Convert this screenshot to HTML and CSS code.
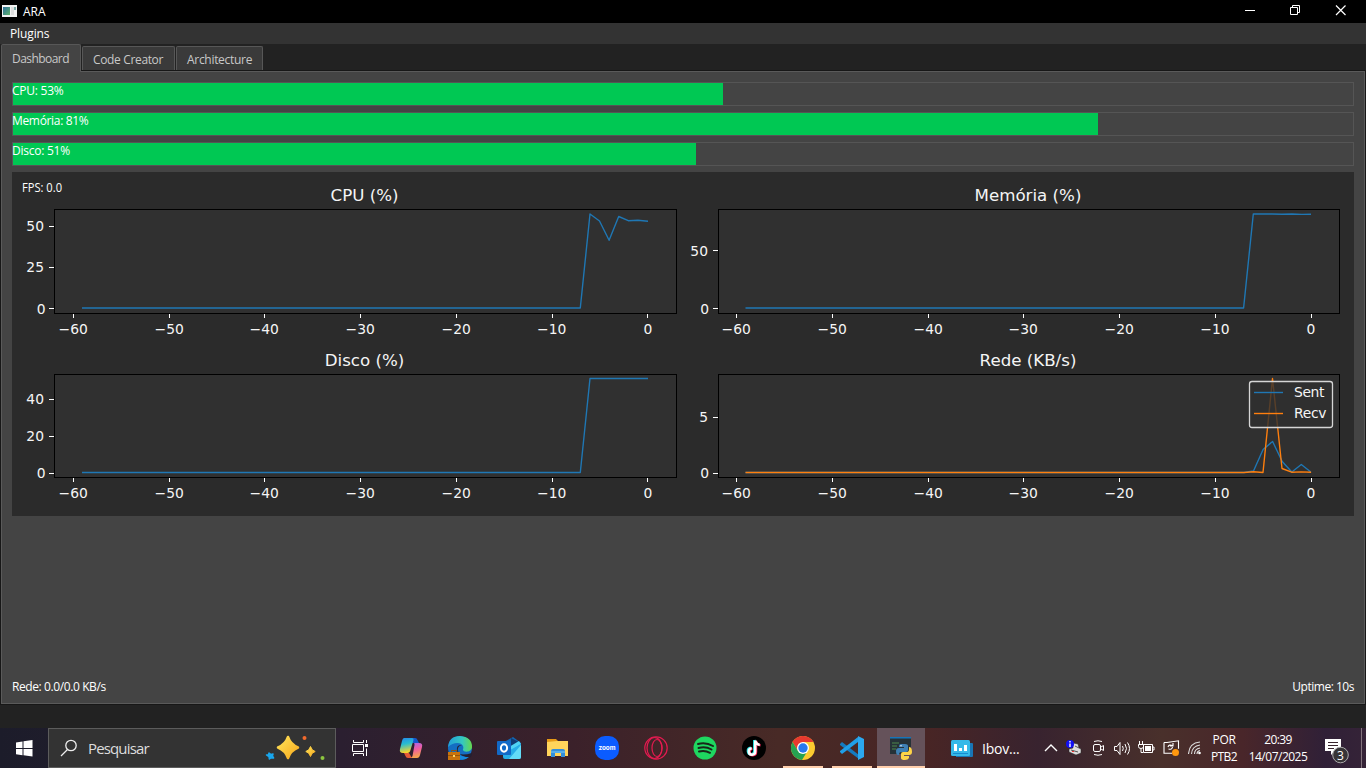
FILE: index.html
```html
<!DOCTYPE html>
<html lang="pt-BR">
<head>
<meta charset="utf-8">
<title>ARA</title>
<link rel="stylesheet" href="styles.css">
</head>
<body>
<div class="desktop">
  <header class="titlebar">
    <svg class="app-icon" width="15" height="13" viewBox="0 0 15 13"><defs><linearGradient id="ai" x2="1" y2="1"><stop stop-color="#2d6f9e"/><stop offset="1" stop-color="#5fb26a"/></linearGradient></defs><path fill="#f2f2f2" d="M0 0h15v12H0z"/><path fill="url(#ai)" d="M1 2h7v8H1z"/><path fill="#ddd" d="M9 2h3v8H9z"/><path fill="#79a9a6" d="M12 2h2v3h-2z"/></svg>
    <span class="title">ARA</span>
    <div class="controls">
      <svg width="46" height="23"><path d="M18 10.5h10" stroke="#fff"/></svg>
      <svg width="46" height="23" fill="none" stroke="#fff"><path d="M17.500 7.500h7v7h-7zM19.500 7.500v-2h7v7h-2"/></svg>
      <svg width="46" height="23"><path d="M17 5.500l9.500 9.500M26.500 5.500L17 15" stroke="#fff" stroke-width="1.200"/></svg>
    </div>
  </header>
  <nav class="menubar"><span class="menu-item">Plugins</span></nav>
  <div class="tabs">
    <div class="tab active"><span>Dashboard</span></div>
    <div class="tab code"><span>Code Creator</span></div>
    <div class="tab arch"><span>Architecture</span></div>
  </div>
  <main class="pane">
    <div class="bars">
      <div class="bar"><div class="fill" style="width:710px">CPU: 53%</div></div>
      <div class="bar"><div class="fill mem" style="width:1085px">Memória: 81%</div></div>
      <div class="bar"><div class="fill" style="width:683px">Disco: 51%</div></div>
    </div>
    <svg class="figure" width="1342" height="344" viewBox="12 172 1342 344">
      <path fill="#2b2b2b" d="M12 172h1342v344H12z"/>
      <text class="fps" x="22" y="192" textLength="40" lengthAdjust="spacingAndGlyphs">FPS: 0.0</text>
      <g class="axes">
        <rect x="54.500" y="209.500" width="622" height="104"/><rect x="718.500" y="209.500" width="621" height="104"/>
        <rect x="54.500" y="374.500" width="622" height="103"/><rect x="718.500" y="374.500" width="621" height="103"/>
      </g>
      <g class="ticks">
        <path d="M73.500 314v4M169.500 314v4M264.500 314v4M360.500 314v4M456.500 314v4M552.500 314v4M647.500 314v4"/>
        <path d="M73.500 478v4M169.500 478v4M264.500 478v4M360.500 478v4M456.500 478v4M552.500 478v4M647.500 478v4"/>
        <path d="M736.500 314v4M832.500 314v4M928.500 314v4M1023.500 314v4M1119.500 314v4M1215.500 314v4M1311.500 314v4"/>
        <path d="M736.500 478v4M832.500 478v4M928.500 478v4M1023.500 478v4M1119.500 478v4M1215.500 478v4M1311.500 478v4"/>
        <path d="M49 226.500h5M49 267.500h5M49 308.500h5M49 399.500h5M49 436.500h5M49 473.500h5M713 250.500h5M713 308.500h5M713 417.500h5M713 473.500h5"/>
      </g>
      <g class="names"><text x="364.500" y="201">CPU (%)</text><text x="1028" y="201">Memória (%)</text><text x="364.500" y="366">Disco (%)</text><text x="1028" y="366">Rede (KB/s)</text></g>
      <g class="xl">
        <text x="73.200" y="334">−60</text><text x="169.200" y="334">−50</text><text x="264.200" y="334">−40</text><text x="360.200" y="334">−30</text><text x="456.200" y="334">−20</text><text x="551.700" y="334">−10</text><text x="648" y="334">0</text>
        <text x="73.200" y="498">−60</text><text x="169.200" y="498">−50</text><text x="264.200" y="498">−40</text><text x="360.200" y="498">−30</text><text x="456.200" y="498">−20</text><text x="551.700" y="498">−10</text><text x="648" y="498">0</text>
        <text x="736.200" y="334">−60</text><text x="832.200" y="334">−50</text><text x="928.200" y="334">−40</text><text x="1023.200" y="334">−30</text><text x="1119.200" y="334">−20</text><text x="1215" y="334">−10</text><text x="1311" y="334">0</text>
        <text x="736.200" y="498">−60</text><text x="832.200" y="498">−50</text><text x="928.200" y="498">−40</text><text x="1023.200" y="498">−30</text><text x="1119.200" y="498">−20</text><text x="1215" y="498">−10</text><text x="1311" y="498">0</text>
      </g>
      <g class="yl">
        <text x="44" y="231">50</text><text x="44" y="272">25</text><text x="45.500" y="314">0</text>
        <text x="44" y="404">40</text><text x="44" y="441">20</text><text x="45.500" y="478">0</text>
        <text x="708" y="256">50</text><text x="709" y="314">0</text><text x="708" y="422">5</text><text x="709" y="478">0</text>
      </g>
      <g class="line">
        <path d="M82 308H580.300L590 214l9.500 7 9.600 19.300 9.600-23.800 9.600 4.200 9.600-.4 10.100 1"/>
        <path d="M745.500 308H1243.600L1253.300 214H1272l10 .2 10-.2 10 .4 9-.2"/>
        <path d="M82 472.500H580.300L590 378.500H648"/>
        <path d="M745.500 472.500H1244L1253.500 471l9.600-21.500 9.500-8 9.600 20 9.600 10.500 9.500-7.500 9.500 7.500"/>
        <path class="recv" d="M745.500 472.500H1244l9.500-.7 9.500.7 9.500-94 9.500 90 9.600 3.700 9.500-.3 10 .4"/>
      </g>
      <rect class="legend" x="1249.500" y="381.500" width="83" height="46" rx="2.500"/>
      <g class="line"><path d="M1254 392.500h29"/><path class="recv" d="M1254 413.500h29"/></g>
      <g class="lt"><text x="1294" y="397" textLength="30.500">Sent</text><text x="1294" y="418" textLength="32.500">Recv</text></g>
    </svg>
    <footer class="status"><span class="rede">Rede: 0.0/0.0 KB/s</span><span class="uptime">Uptime: 10s</span></footer>
  </main>
  <div class="strip"></div>
  <div class="taskbar">
    <div class="start"><svg width="17" height="17" viewBox="0 0 17 17" fill="#fff"><path d="M0 2.600L6.500 1.500V8H0zM7.500 1.300L16.500 0v8h-9zM0 9h6.500v6.300L0 14.300zM7.500 9h9v7.600l-9-1.300z"/></svg></div>
    <div class="search">
      <svg width="18" height="18" fill="none" stroke="#eee" stroke-width="1.300"><circle cx="11" cy="6.500" r="5.200"/><path d="M7.500 10.500L1 17"/></svg>
      <span class="find">Pesquisar</span>
      <svg class="sparkles" width="62" height="26"><defs><linearGradient id="sp" x2="1" y2="1"><stop stop-color="#ffe45a"/><stop offset="1" stop-color="#f7a91d"/></linearGradient></defs><path fill="url(#sp)" stroke="url(#sp)" stroke-linejoin="round" stroke-width="2.500" d="M24 2q2.500 7.500 10 10.500Q26.500 15.500 24 23q-2.500-7.500-10-10.500Q21.500 9.500 24 2z"/><path fill="url(#sp)" stroke="url(#sp)" stroke-linejoin="round" d="M46.500 11.500q1.200 4 4.700 5-3.500 1-4.700 5-1.200-4-4.700-5 3.500-1 4.700-5z"/><path fill="#19a7ee" stroke="#19a7ee" stroke-linejoin="round" stroke-width="1.500" d="M5 18l2 1.500 2-.5-.6 2 1.200 2-2.400-.3-1.800 1.300-.4-2.300L2.500 20h2z"/><circle cx="40.500" cy="3" r="2" fill="#f26a2d"/><circle cx="58.500" cy="23" r="2" fill="#8cc63f"/></svg>
    </div>
    <div class="taskview"><svg width="17" height="16" fill="none" stroke="#fff"><path d="M1.500 0v2.500h10V0M1.500 16v-2.500h10V16M.5 4.500h11v7H.5zM14.500 0v3M14.500 8.500V16"/><path fill="#fff" stroke="none" d="M13 4h3v3h-3z"/></svg></div>
    <div class="apps">
      <div class="app"><svg width="24" height="24" viewBox="0 0 24 24"><defs><linearGradient id="c1" x2=".2" y2="1"><stop stop-color="#2489ec"/><stop offset=".45" stop-color="#28bdd0"/><stop offset="1" stop-color="#f4d62f"/></linearGradient><linearGradient id="c2" x2=".2" y2="1"><stop stop-color="#a565ed"/><stop offset=".5" stop-color="#f15e9e"/><stop offset="1" stop-color="#f6a34e"/></linearGradient></defs><path fill="#1457cc" d="M10 2h6q2 0 2.500 2L20 7h-7z"/><path fill="url(#c1)" d="M5 2h8q2 0 1.500 2l-3 10q-.7 3-3 3H4q-4 0-3-4L3 5q.7-3 2-3z"/><path fill="#e35b36" d="M5 17h5l3 5H9q-2 0-2.500-2z"/><path fill="url(#c2)" d="M15 7h5q4 0 3 4l-2 8q-.7 3-3 3h-7q2 0 2.500-2l2-11q.1-2-.5-2z"/></svg></div>
      <div class="app"><svg width="24" height="24" viewBox="0 0 24 24"><defs><linearGradient id="e1" x2="1"><stop stop-color="#219ed9"/><stop offset=".6" stop-color="#35c8c0"/><stop offset="1" stop-color="#67d84c"/></linearGradient></defs><circle cx="12" cy="12" r="12" fill="#146ec2"/><path fill="url(#e1)" d="M0 11Q1 0 12 0q12 1 12 11c0 5-8 6-9 3-.5-1 1-1 0-4-1.500-4-10-4-15 1z"/><path fill="#252031" d="M14 9q-6-1-5 6 2 6 15 2v2q-1 2-3 3-10-2-11-7-1-5 4-6z"/><path fill="#1689dc" d="M9 12q-1 9 12 9-4 4-11 2z"/><path fill="#c9730c" d="M0 16h12v8H0z"/><path fill="none" stroke="#94560d" d="M3.500 16v-1.500h5V16M0 19.500h12"/><path fill="#ffd364" d="M5 19h2v2H5z"/></svg></div>
      <div class="app"><svg width="24" height="24" viewBox="0 0 24 24"><path fill="#1267b4" d="M5 7l11-6 8 6v7H6z"/><path fill="#103c75" d="M14 2l8 4-8 7z"/><path fill="#4fd3f5" d="M12 11l10-6 2 3-10 7z"/><path fill="#27aee8" d="M6 15l9-2 9-5v13q0 2-2 2H8q-2 0-2-2z"/><path fill="#63dcf7" d="M24 9v12q0 2-2 2H12z"/><rect y="5" width="14" height="14" rx="1" fill="#1269c7"/><ellipse cx="7" cy="12" rx="3.100" ry="3.700" fill="none" stroke="#fff" stroke-width="2"/></svg></div>
      <div class="app"><svg width="24" height="24" viewBox="0 0 24 24"><path fill="#e69a16" d="M1 3h9l2 2v3H1z"/><path fill="#ffd45b" d="M1 6l10-1h11v15H1z"/><path fill="#328edb" d="M5 21v-6q0-2 2-2h10q2 0 2 2v6h-4v-4H9v4z"/><path fill="#57afe9" d="M5 15h14v2H5z"/></svg></div>
      <div class="app"><svg width="24" height="24"><rect width="24" height="24" rx="10" fill="#0b5cff"/><text x="12" y="14" class="zoom" textLength="17" lengthAdjust="spacingAndGlyphs">zoom</text></svg></div>
      <div class="app"><svg width="24" height="24" fill="none" stroke="#e31b50" stroke-width="1.200"><circle cx="12" cy="12" r="11.200"/><ellipse cx="10.500" cy="12" rx="7.500" ry="10.500"/><ellipse cx="13" cy="12" rx="5" ry="8.500"/></svg></div>
      <div class="app"><svg width="24" height="24"><circle cx="12" cy="12" r="11.500" fill="#1ed760"/><path d="M5 8q8-2 15 2M5.500 12q7-2 13 1.500M6 15.500q6-1.500 11 1.300" fill="none" stroke="#182619" stroke-width="2" stroke-linecap="round"/></svg></div>
      <div class="app"><svg width="24" height="24"><circle cx="12" cy="12" r="12"/><g fill="none" stroke-width="2.500"><path stroke="#28e5e3" d="M12.300 4v11a3.200 3.200 0 1 1-3.500-3.200M12.300 4q.8 4 4.500 4.200"/><path stroke="#fe2858" d="M14 5v11a3.200 3.200 0 1 1-3.500-3.200M14 5q.8 4 4.500 4.200"/><path stroke="#fff" d="M13.200 4.500v11a3.200 3.200 0 1 1-3.500-3.200M13.200 4.500q.8 4 4.500 4.200"/></g></svg></div>
      <div class="app running"><svg width="24" height="24"><circle cx="12" cy="12" r="12" fill="#fccb30"/><path fill="#e8392f" d="M1.600 6A12 12 0 0 1 22.400 6H12L7 15z"/><path fill="#26a252" d="M1.600 6A12 12 0 0 0 11 24l5.500-9H7z"/><circle cx="12" cy="12" r="6" fill="#fff"/><circle cx="12" cy="12" r="4.700" fill="#2879ee"/></svg></div>
      <div class="app running"><svg width="24" height="24"><path fill="#147bc1" d="M0 8l2-2 17 13v4L0 9z"/><path fill="#209fe8" d="M0 15L18 1v5L2 18l-2-2z"/><path fill="#2ba8ef" d="M18 0l6 3v18l-6 3z"/></svg></div>
      <div class="app running selected"><svg width="24" height="24"><path fill="#263238" d="M1 1h21v17H1z"/><path fill="#1675b9" d="M1 1h21v1.500H1z"/><path fill="none" stroke="#406c45" stroke-width="1.500" d="M3 7h7M3 10h5M3 13h4"/><path fill="#3f80b4" d="M12 8h4q3 0 3 2v4q0 2-2 2h-5q-2 0-2 3H9q-2 0-2-4 0-3 3-3h5v-1h-5V10q0-2 2-2z"/><path fill="#ffd447" d="M20 11q3 0 3 5 0 3-3 3h-5v1h5v2q-1 2-4 2-4 0-4-2v-4q0-2 2-2h4q2 0 2-3z"/><circle cx="12" cy="9.700" r=".7" fill="#fff"/></svg></div>
    </div>
    <div class="tray">
      <svg width="22" height="17"><path fill="#1876b6" d="M5 3h16q1 0 1 1v12q0 1-1 1H5z"/><rect width="19" height="16" rx="1.500" fill="#35b9e8"/><path fill="#fff" d="M3 4h3v7H3zM8 8h3v3H8zM13 5h3v6h-3z"/><path fill="#168bcf" d="M2 13h15v1H2z"/></svg>
      <span class="widget-text">Ibov...</span>
      <svg width="14" height="10"><path fill="none" stroke="#fff" stroke-width="1.400" d="M1 8L7 2l6 6"/></svg>
      <svg width="16" height="16"><path fill="#ddd" stroke="#222" stroke-width=".5" d="M7 3l5 1 1 4 2 1v4l-5 2-7-3V9l4-1z"/><path stroke="#555" d="M5 10l7 2M9 6l4 2"/><path fill="#e33" d="M6 11h2v1H6z"/><circle cx="4" cy="4" r="4" fill="#1010f4"/><path stroke="#fff" stroke-width="1.400" d="M4 1v1.500M4 3.500V7"/></svg>
      <svg width="14" height="16" fill="none" stroke="#fff"><path d="M2 1.500q4-1.500 8 0M2 14.500q4 1.500 8 0"/><rect x="1.500" y="4.500" width="7" height="7" rx="1.500"/><path d="M9 7l2.500-1.500v5L9 9"/></svg>
      <svg width="17" height="15" fill="none" stroke="#fff"><path d="M.5 5.500H3l3-4v12l-3-4H.5zM8.500 5q1.500 2.500 0 5M11 3q3 4.500 0 9M13.500 1.500q4 6 0 12"/></svg>
      <svg width="17" height="14" fill="none" stroke="#fff"><path d="M5.500 3.500h9v8h-9zM14.500 6h1.500v3h-1.500M1.500 0v3M4.500 0v3M.5 3.500h5v2q0 2-2.500 2t-2.500-2zM3 7.500v4h2"/><path fill="#fff" stroke="none" d="M7 5h6v5H7z"/></svg>
      <svg width="17" height="16" fill="none" stroke="#fff" stroke-width="1.100"><path d="M1 2.500h3L15.500.8v8M1 2.500v10.700h8M5 7q1-3 4.500-1.500M10 3v3H7M9.500 7q-.5 3-4 2"/><circle cx="12.500" cy="12.500" r="3.500" fill="#ff980f" stroke="none"/></svg>
      <svg width="14" height="14" fill="none" stroke="#ddd" stroke-width="1.100"><path d="M.5 13Q1 2 12 1M3.500 13Q4 5 12 4M6.500 13q0-5 5.500-6M9 13q0-3 3-3.500"/><circle cx="11.500" cy="12" r="1.300" fill="#fff" stroke="none"/></svg>
      <div class="pair lang"><span class="por">POR</span><span class="ptb">PTB2</span></div>
      <div class="pair clock"><span class="time">20:39</span><span class="date">14/07/2025</span></div>
      <svg class="notice" width="25" height="26"><path fill="#fff" d="M0 1h16v12h-6l-4 4v-4H0z"/><path stroke="#39252e" d="M3 4.500h10M3 7.500h10M3 10.500h6"/><circle cx="15.500" cy="17" r="7.800" fill="#373437" stroke="#aaa"/><text x="15.500" y="21.500">3</text></svg>
    </div>
    <div class="show-desktop"></div>
  </div>
</div>
</body>
</html>
```
FILE: styles.css
```css
* { box-sizing: border-box; }
body { margin: 0; overflow: hidden; font-family: "Open Sans", "Noto Sans", sans-serif; font-size: 12px; color: #fff; }
svg { display: block; flex: none; }
span { white-space: nowrap; }
.desktop { width: 1366px; height: 768px; display: flex; flex-direction: column; background: #222; }
.titlebar { height: 23px; background: #000; display: flex; align-items: center; padding-left: 2px; flex: none; }
.title { margin-left: 6px; font-size: 12px; letter-spacing: 0; }
.controls { display: flex; margin-left: auto; padding-right: 1px; }
.menubar { height: 21px; background: #333; padding-left: 10px; line-height: 22px; flex: none; }
.menu-item { letter-spacing: -.12px; }
.tabs { height: 26px; display: flex; align-items: flex-end; gap: 1px; padding-left: 1px; flex: none; }
.tab { height: 24px; background: #3a3a3a; border: 1px solid #575757; border-bottom: 0; border-radius: 2px 2px 0 0; color: #c8c8c8; line-height: 26px; padding-left: 10px; }
.tab.active { width: 80px; height: 28px; margin-bottom: -2px; background: #444; line-height: 28px; z-index: 1; position: relative; }
.tab.active span { letter-spacing: -.55px; }
.tab.code { width: 93px; }
.tab.code span { letter-spacing: -.35px; }
.tab.arch { width: 87px; }
.tab.arch span { letter-spacing: -.3px; }
.pane { height: 633px; margin: 1px 1px 0; background: #444; border: 1px solid #5a5a5a; box-shadow: 0 0 0 1px #171717; padding: 10px 10px 0; flex: none; display: flex; flex-direction: column; }
.bars { display: flex; flex-direction: column; gap: 6px; }
.bar { height: 24px; border: 1px solid #555; }
.fill { height: 22px; background: #00c853; line-height: 16px; font-size: 12px; letter-spacing: -.25px; white-space: nowrap; text-indent: -1px; }
.fill.mem { letter-spacing: -.33px; }
.figure { margin-top: 6px; }
.fps { font-size: 12px; fill: #fff; }
.axes rect { fill: #303030; stroke: #000; }
.ticks path { stroke: #fff; }
.names, .xl, .yl, .lt { font-family: "DejaVu Sans", sans-serif; font-size: 13.89px; fill: #f5f5f5; }
.names { font-size: 16.67px; text-anchor: middle; }
.xl { text-anchor: middle; }
.yl { text-anchor: end; }
.line path { fill: none; stroke: #1f77b4; stroke-width: 1.390; stroke-linejoin: round; }
.line .recv { stroke: #ff7f0e; }
.legend { fill: #303030; fill-opacity: .8; stroke: #d6d6d6; stroke-width: 1.300; }
.status { margin-top: auto; display: flex; justify-content: space-between; height: 25px; line-height: 17px; }
.rede { letter-spacing: -.4px; }
.uptime { letter-spacing: -.48px; }
.strip { flex: 1; }
.taskbar { height: 40px; flex: none; display: flex; background: linear-gradient(90deg, #1c1c2a 0, #2b1f30 25%, #3b212a 42%, #482a26 57%, #482525 68%, #38232f 76%, #49302b 85%, #49262a 91%, #302037 97%, #352337); }
.start { width: 48px; display: flex; align-items: center; justify-content: center; }
.search { width: 288px; border: 1px solid #5c5c5c; background: #333; display: flex; align-items: center; padding-left: 11px; }
.find { font-size: 15px; letter-spacing: -.85px; color: #ddd; margin-left: 10px; }
.sparkles { margin-left: auto; margin-right: 9px; }
.taskview { width: 50px; display: flex; align-items: center; justify-content: center; padding-right: 2px; }
.apps { display: flex; gap: 1px; padding-left: 1px; }
.app { width: 48px; display: flex; align-items: center; justify-content: center; }
.running { background: linear-gradient(#ffcfac, #ffcfac) center bottom / 40px 2px no-repeat; }
.running.selected { background: linear-gradient(transparent 38px, #ffcfac 38px), #65525a; }
.zoom { font-family: Inter, sans-serif; font-size: 7px; font-weight: 700; text-anchor: middle; fill: #fff; }
.tray { flex: 1; display: grid; align-items: center; grid-template-columns: 31px 62px 22px 26px 22px 24px 25px 25px 22px 38px 62px 34px; padding-left: 26px; }
.widget-text { font-size: 14px; letter-spacing: -.2px; }
.pair { display: flex; flex-direction: column; line-height: 17px; text-align: center; font-size: 12px; }
.lang { width: 28px; }
.por { letter-spacing: -.3px; }
.ptb { letter-spacing: -.6px; }
.clock { width: 60px; }
.time { letter-spacing: -.65px; }
.date { letter-spacing: -.5px; }
.notice { margin-left: 15px; margin-top: 6px; }
.notice text { font-size: 12px; fill: #fff; text-anchor: middle; }
.show-desktop { width: 5px; border-left: 1px solid #82737c; }
```
